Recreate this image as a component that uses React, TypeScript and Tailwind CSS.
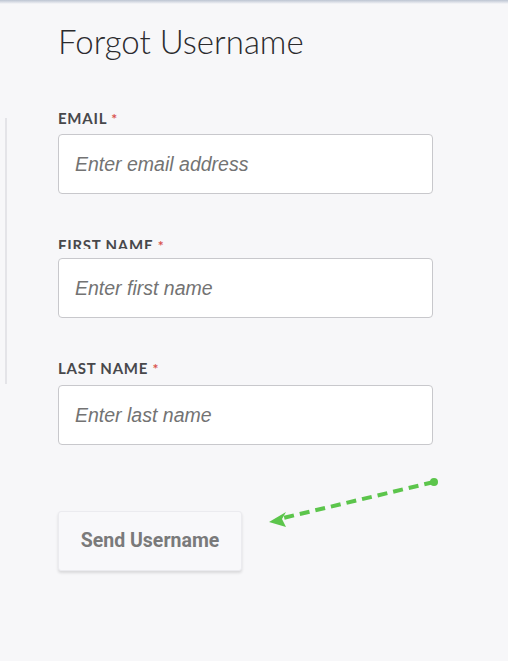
import React from "react";

function Field({
  label,
  placeholder,
  labelClass,
}: {
  label: string;
  placeholder: string;
  labelClass: string;
}) {
  return (
    <div className="flex flex-col">
      <div
        className={`${labelClass} overflow-hidden text-[15px] leading-[20px] font-bold tracking-[0.05em] text-[#48484b] font-['Lato',sans-serif]`}
      >
        {label} <span className="text-[#d9534f] text-[14px]">*</span>
      </div>
      <input
        className="w-[375px] h-[60px] rounded-[4px] border border-[#c8c8cc] bg-white px-4 text-[19.5px] italic text-[#555] placeholder:text-[#737373] font-['Liberation_Sans',Arial,sans-serif] outline-none"
        placeholder={placeholder}
      />
    </div>
  );
}

export default function App() {
  return (
    <div className="relative w-[508px] h-[661px] bg-[#f7f7f9] overflow-hidden">
      <div className="h-[4px] bg-gradient-to-b from-[#bcc4d2] to-[#f7f7f9]" />
      <div className="flex flex-row">
        <div className="w-[5px]" />
        <div className="w-[2px] h-[266px] mt-[114px] bg-[#e4e4e8]" />
        <div className="ml-[51px] flex flex-col">
          <h1 className="mt-[18px] text-[33px] leading-[38px] font-light text-[#2b2b2e] font-['Lato_Light','Lato',sans-serif]">
            Forgot Username
          </h1>
          <div className="mt-[48px]">
            <Field label="EMAIL" placeholder="Enter email address" labelClass="h-[20px] mb-[6px]" />
          </div>
          <div className="mt-[41px]">
            <Field label="FIRST NAME" placeholder="Enter first name" labelClass="h-[14px] mb-[9px]" />
          </div>
          <div className="mt-[40px]">
            <Field label="LAST NAME" placeholder="Enter last name" labelClass="h-[20px] mb-[7px]" />
          </div>
          <button className="mt-[66px] w-[184px] h-[60px] rounded-[3px] border border-[#ebebef] bg-[#f8f8fa] shadow-[0_2px_3px_rgba(0,0,0,0.12)] text-[19.5px] font-bold text-[#7a7a7a] font-['Roboto',sans-serif]">
            Send Username
          </button>
        </div>
      </div>
      <svg
        className="absolute left-0 top-0 pointer-events-none"
        width="508"
        height="661"
        viewBox="0 0 508 661"
      >
        <line
          x1="434"
          y1="482"
          x2="283"
          y2="518"
          stroke="#5cc54c"
          strokeWidth="4"
          strokeDasharray="10 6"
        />
        <circle cx="434" cy="482" r="4" fill="#5cc54c" />
        <path d="M269 522 L286 512 L282 519 L286 527 Z" fill="#5cc54c" />
      </svg>
    </div>
  );
}
